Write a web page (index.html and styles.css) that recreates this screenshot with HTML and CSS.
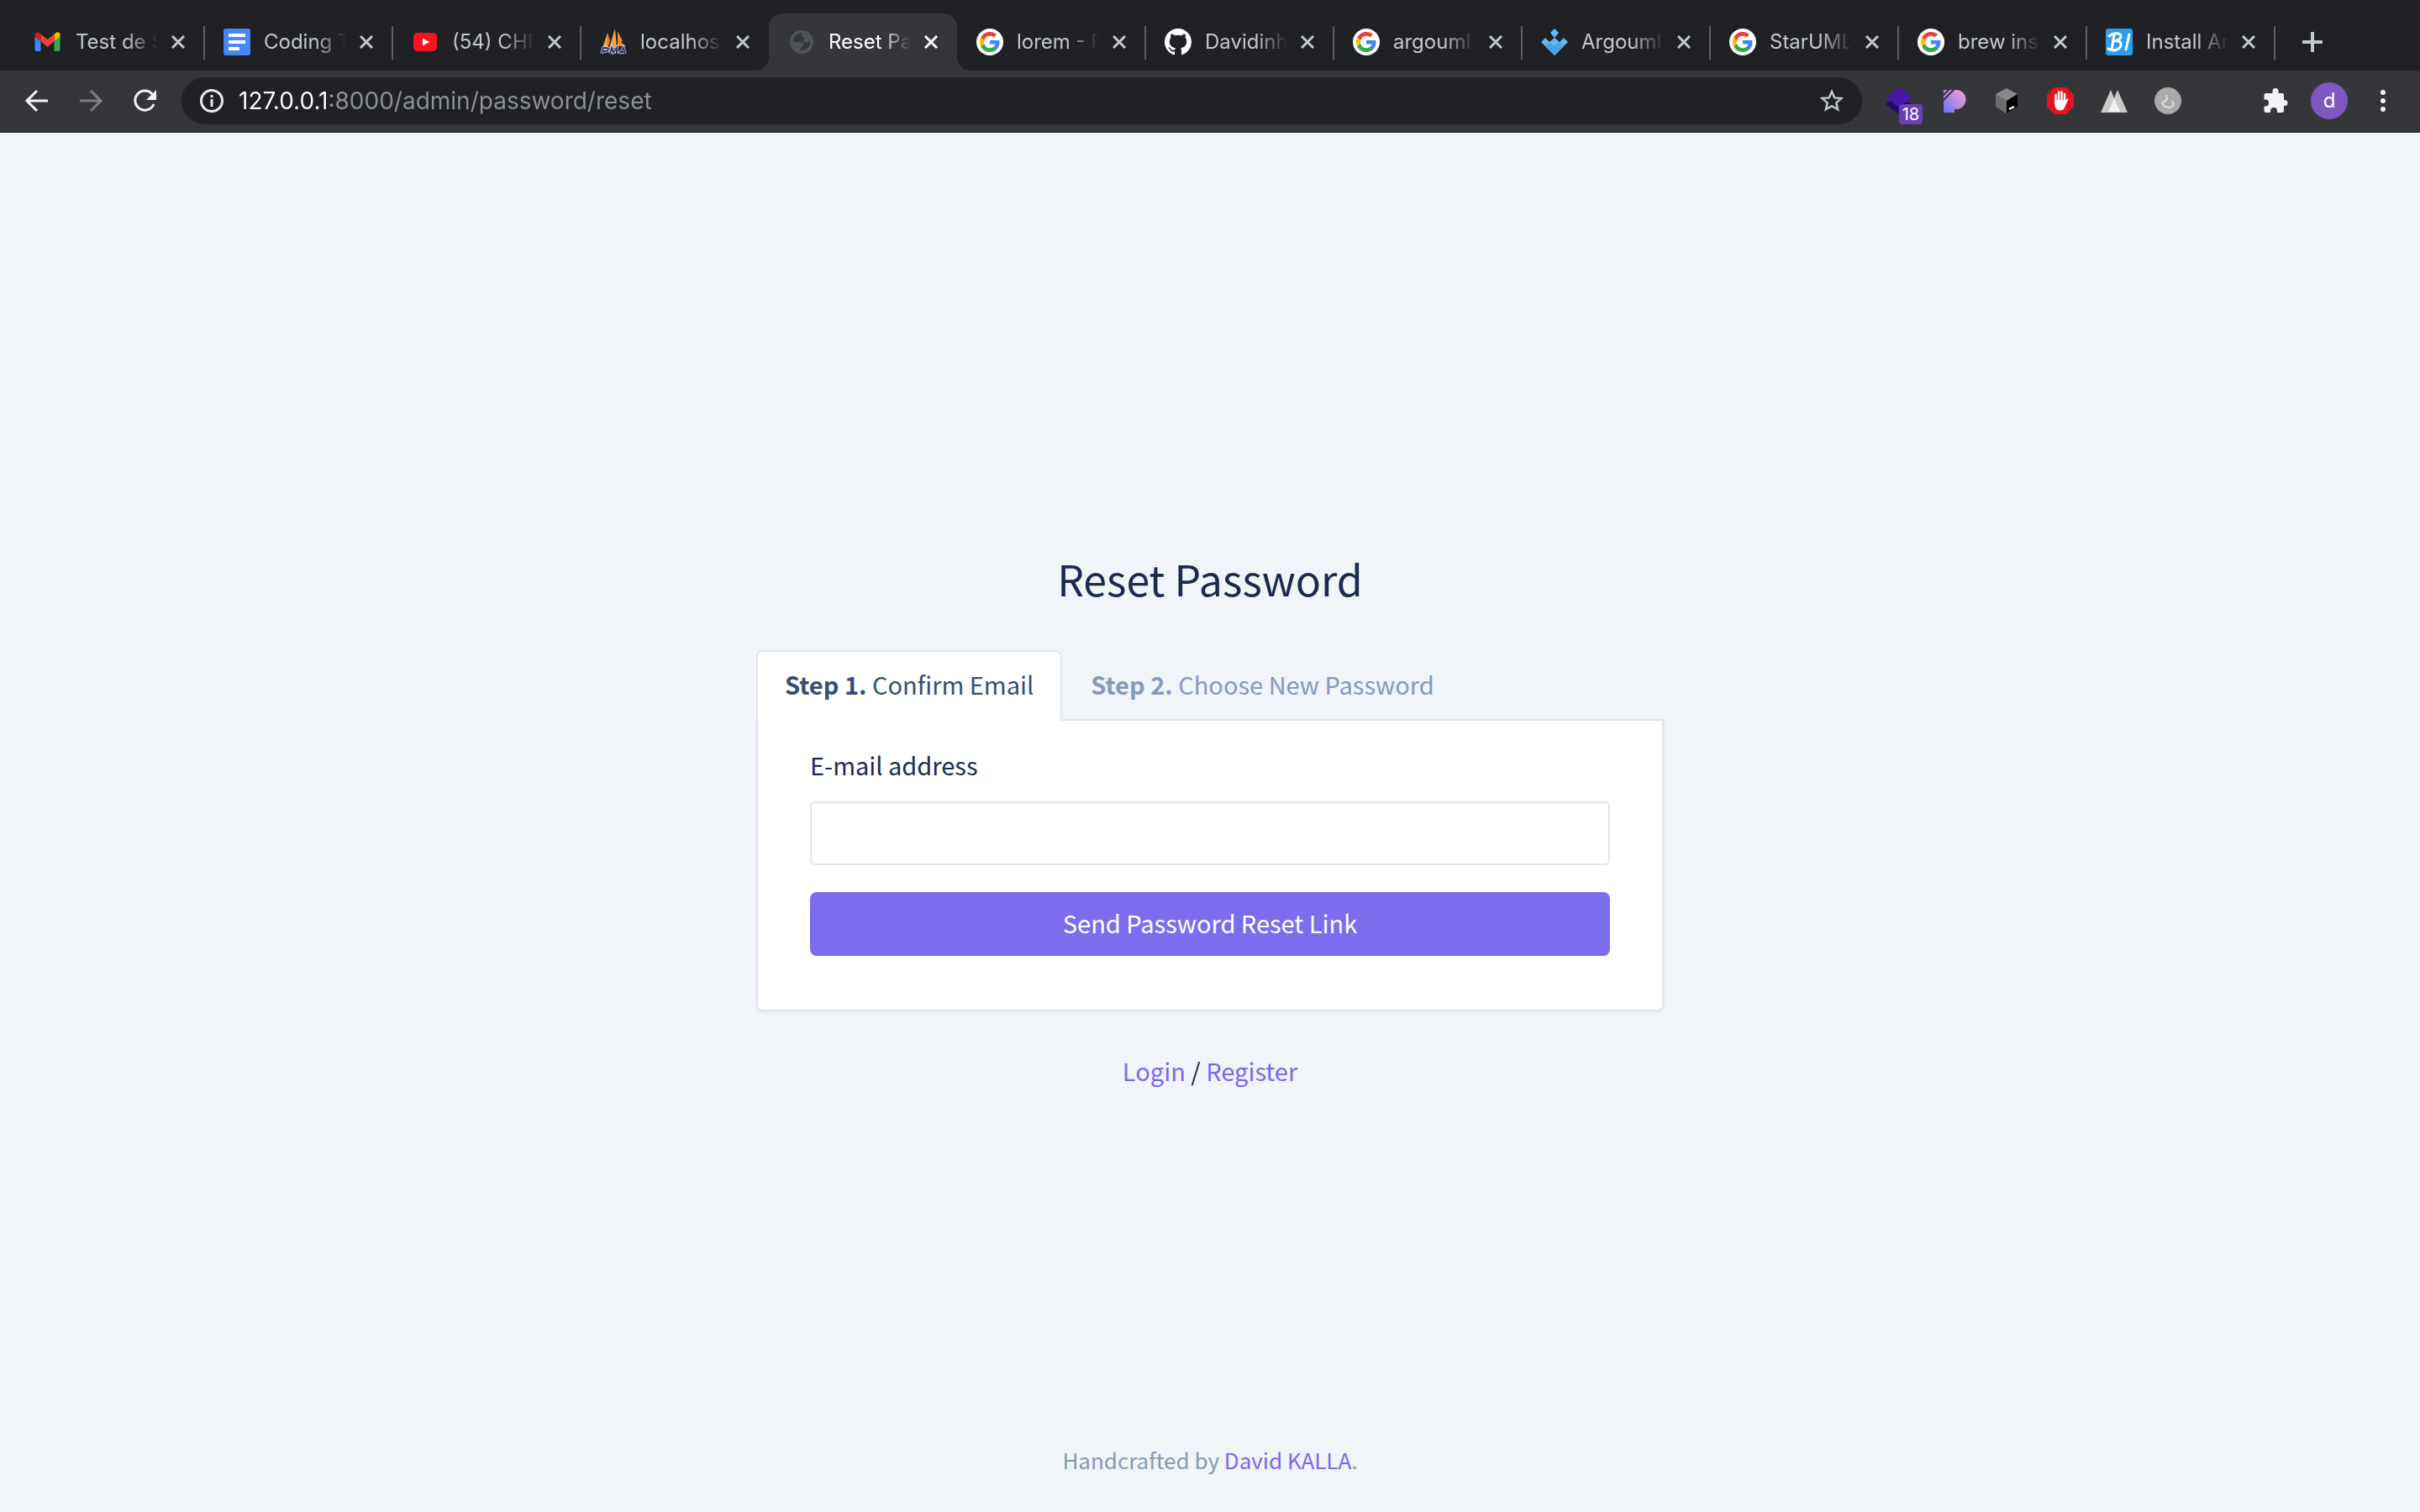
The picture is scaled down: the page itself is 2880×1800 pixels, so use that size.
FILE: index.html
```html
<!DOCTYPE html>
<html lang="en">
<head>
<meta charset="utf-8">
<meta name="viewport" content="width=device-width, initial-scale=1">
<title>Reset Password</title>
<link rel="stylesheet" href="styles.css">
</head>
<body>
<svg class="sprite" aria-hidden="true">
  <symbol id="close" viewBox="0 0 16 16"><path d="M1 1l14 14M15 1L1 15" fill="none" stroke="currentColor" stroke-width="3"/></symbol>
  <symbol id="google" viewBox="0 0 32 32">
    <circle cx="16" cy="16" r="16" fill="#fff"/>
    <g transform="translate(4 4)">
      <path fill="#4285f4" d="M23.5 12.3c0-.8-.1-1.6-.2-2.4H12v4.6h6.5c-.3 1.5-1.100 2.700-2.400 3.600v3h3.900c2.200-2.100 3.500-5.100 3.500-8.800z"/>
      <path fill="#34a853" d="M12 24c3.200 0 6-1.100 8-2.900l-3.900-3c-1.100.7-2.500 1.200-4.100 1.200-3.100 0-5.800-2.100-6.700-5H1.300v3.100C3.300 21.300 7.300 24 12 24z"/>
      <path fill="#fbbc05" d="M5.300 14.300c-.2-.7-.4-1.500-.4-2.300s.1-1.600.4-2.300V6.600h-4C.5 8.200 0 10.100 0 12s.5 3.800 1.300 5.400z"/>
      <path fill="#ea4335" d="M12 4.800c1.800 0 3.300.6 4.600 1.800L20 3.200C17.900 1.200 15.200 0 12 0 7.300 0 3.300 2.700 1.300 6.600l4 3.100c.9-2.800 3.600-4.900 6.700-4.900z"/>
    </g>
  </symbol>
</svg>

<header class="browser">
  <nav class="tabs" aria-label="Open tabs">
    <div class="tab">
      <svg class="favicon" viewBox="0 0 32 32"><path fill="#4285f4" d="M1.500 27h5V15L-.500 10v15a2 2 0 0 0 2 2z"/><path fill="#34a853" d="M22.500 27h5a2 2 0 0 0 2-2V10l-7 5z"/><path fill="#fbbc04" d="M22.500 7v8l7-5V7.500c0-3-3-4-5-2.500z"/><path fill="#ea4335" d="M6.500 15V6.500l8 6.500 8-6.500V15l-8 7z"/><path fill="#c5221f" d="M-.500 8v2l7 5V6.500L4.500 5C2 3.500-.500 5-.500 8z"/></svg>
      <a class="title" href="#">Test de S</a><button class="close" aria-label="Close tab"><svg><use href="#close"/></svg></button>
    </div>
    <div class="tab">
      <svg class="favicon" viewBox="0 0 32 32"><rect width="32" height="32" rx="3" fill="#4688f1"/><path fill="#fff" d="M6 6h20v4H6zM6 14h20v4H6zM6 22h13v4H6z"/></svg>
      <a class="title" href="#">Coding T</a><button class="close" aria-label="Close tab"><svg><use href="#close"/></svg></button>
    </div>
    <div class="tab">
      <svg class="favicon" viewBox="0 0 32 32"><rect x="2" y="5" width="28" height="22" rx="5" fill="#f81320"/><path fill="#fff" d="M13 11.500v9l8-4.500z"/></svg>
      <a class="title" href="#">(54) CHR</a><button class="close" aria-label="Close tab"><svg><use href="#close"/></svg></button>
    </div>
    <div class="tab tab-before">
      <svg class="favicon" viewBox="0 0 32 32"><path fill="#f6a347" d="M3 23L9 5l1 18zM11 23L18 0l2 23z"/><path fill="#f38b20" d="M21 3l6 12-2 1 6 5H21zM9 5l3 9-2 7z"/><path d="M2 30l2-7h4c3 0 2 4-1 4H4M12 30l2-7 2 5 4-5v7M23 30l5-7 2 7M25 28h4" fill="none" stroke="#d9d9e6" stroke-width="3.500"/><path d="M2 30l2-7h4c3 0 2 4-1 4H4M12 30l2-7 2 5 4-5v7M23 30l5-7 2 7M25 28h4" fill="none" stroke="#34366e" stroke-width="2"/></svg>
      <a class="title" href="#">localhost</a><button class="close" aria-label="Close tab"><svg><use href="#close"/></svg></button>
    </div>
    <div class="tab tab-active">
      <svg class="favicon" viewBox="0 0 32 32"><circle cx="16" cy="16" r="14" fill="#505358"/><path fill="#35363a" d="M17 5c-4 1-7 3-6 5l4 1 3 3 4 1 4-2c1 8-3 13-10 13l-3-2 1-3 3-1-1-3H7l-2-2c0 8 5 13 11 13s12-4 12-11S22 3 17 5z" opacity="0"/><path fill="#35363a" d="M17 5l-1 4 3 2-1 4 4 2 4-3c1 7-3 12-10 12h-2l1-4 3-1v-4l-4-1H6c0-6 4-11 11-11z"/></svg>
      <a class="title" href="#" aria-current="page">Reset Pas</a><button class="close" aria-label="Close tab"><svg><use href="#close"/></svg></button>
    </div>
    <div class="tab">
      <svg class="favicon"><use href="#google"/></svg>
      <a class="title" href="#">lorem - R</a><button class="close" aria-label="Close tab"><svg><use href="#close"/></svg></button>
    </div>
    <div class="tab">
      <svg class="favicon" viewBox="0 0 16 16"><path fill="#fff" d="M8 0C3.580 0 0 3.580 0 8c0 3.540 2.290 6.530 5.470 7.590.4.070.55-.17.55-.38 0-.19-.01-.82-.01-1.490-2.010.37-2.530-.49-2.690-.94-.09-.23-.48-.94-.82-1.130-.28-.15-.68-.52-.01-.53.63-.01 1.080.58 1.230.82.72 1.210 1.870.87 2.330.66.07-.52.28-.87.51-1.070-1.780-.2-3.640-.89-3.640-3.950 0-.87.31-1.590.82-2.150-.08-.2-.36-1.020.08-2.120 0 0 .67-.21 2.200.82.64-.18 1.320-.27 2-.27s1.360.09 2 .27c1.530-1.040 2.200-.82 2.200-.82.44 1.100.16 1.920.08 2.120.51.56.82 1.270.82 2.150 0 3.070-1.870 3.750-3.650 3.950.29.25.54.73.54 1.480 0 1.070-.01 1.930-.01 2.200 0 .21.15.46.55.38A8 8 0 0 0 16 8c0-4.420-3.580-8-8-8z"/></svg>
      <a class="title" href="#">Davidinh</a><button class="close" aria-label="Close tab"><svg><use href="#close"/></svg></button>
    </div>
    <div class="tab">
      <svg class="favicon"><use href="#google"/></svg>
      <a class="title" href="#">argouml</a><button class="close" aria-label="Close tab"><svg><use href="#close"/></svg></button>
    </div>
    <div class="tab">
      <svg class="favicon" viewBox="0 0 32 32"><path fill="#63b7f5" d="M16 0l5 5-5 6-5-6zM0 16l5-5 5 5 6-5 6 5 5-5 5 5-16 16z"/><path fill="#4ba3e3" d="M10 16l6 5 6-5 5 5-11 11L5 21z"/></svg>
      <a class="title" href="#">Argouml</a><button class="close" aria-label="Close tab"><svg><use href="#close"/></svg></button>
    </div>
    <div class="tab">
      <svg class="favicon"><use href="#google"/></svg>
      <a class="title" href="#">StarUML</a><button class="close" aria-label="Close tab"><svg><use href="#close"/></svg></button>
    </div>
    <div class="tab">
      <svg class="favicon"><use href="#google"/></svg>
      <a class="title" href="#">brew inst</a><button class="close" aria-label="Close tab"><svg><use href="#close"/></svg></button>
    </div>
    <div class="tab">
      <svg class="favicon" viewBox="0 0 32 32"><rect width="32" height="32" rx="3" fill="#2b9eee"/><path d="M10 7L7 25M4 9c6-5 15-4 14 1-1 4-6 4-8 5 6-1 9 1 8 5-1 5-9 8-15 4M28 7l-4 18" fill="none" stroke="#fff" stroke-width="3" stroke-linecap="round"/></svg>
      <a class="title" href="#">Install Ar</a><button class="close" aria-label="Close tab"><svg><use href="#close"/></svg></button>
    </div>
    <button class="new-tab" aria-label="New tab"><svg width="24" height="24" viewBox="0 0 24 24"><path d="M12 0v24M0 12h24" stroke="currentColor" stroke-width="4"/></svg></button>
  </nav>

  <div class="toolbar">
    <button class="tool" aria-label="Back"><svg viewBox="0 0 32 32"><path d="M29 16H5M16 4L4 16l12 12" fill="none" stroke="#f1f3f4" stroke-width="3"/></svg></button>
    <button class="tool" aria-label="Forward"><svg viewBox="0 0 32 32"><path d="M3 16h24M16 4l12 12-12 12" fill="none" stroke="#7d7f82" stroke-width="3"/></svg></button>
    <button class="tool" aria-label="Reload"><svg viewBox="0 0 32 32"><path d="M27 20a11.500 11.500 0 1 1-2-12" fill="none" stroke="#f1f3f4" stroke-width="3"/><path fill="#f1f3f4" d="M30 3v12H18z"/></svg></button>
    <div class="omnibox">
      <svg width="28" height="28" viewBox="0 0 28 28"><circle cx="14" cy="14" r="12.500" fill="none" stroke="#e8eaed" stroke-width="3"/><path fill="#e8eaed" d="M12.500 7h3v3h-3zM12.500 12h3v9h-3z"/></svg>
      <input class="url" type="text" aria-label="Address" value="127.0.0.1:8000/admin/password/reset">
      <button class="star" aria-label="Bookmark"><svg width="28" height="28" viewBox="0 0 28 28"><path d="M14 3l3.300 7.400 8.100.7-6.100 5.300 1.800 7.900-7.100-4.200-7.100 4.200 1.800-7.900-6.100-5.300 8.100-.7z" fill="none" stroke="#c4c7cb" stroke-width="2.500"/></svg></button>
    </div>
    <button class="tool" aria-label="Layers extension, 18 items"><svg viewBox="0 0 32 32"><path fill="#1f0a6b" d="M0 20l9-7 23 7-16 12z"/><path fill="#4818a8" d="M16 0l16 12-16 12L0 12z"/></svg><span class="badge">18</span></button>
    <button class="tool" aria-label="Stripes extension"><svg viewBox="0 0 32 32"><defs><linearGradient id="pg" x1="0" y1="1" x2="1" y2="0"><stop offset="0" stop-color="#6675ff"/><stop offset=".5" stop-color="#b58be6"/><stop offset="1" stop-color="#ff9fc3"/></linearGradient></defs><path fill="url(#pg)" d="M5 3h15a11.500 11.500 0 0 1 0 23h-2v4H5z"/><path d="M3 11l10-10M3 17L19 1" stroke="#35363a" stroke-width="2"/></svg></button>
    <button class="tool" aria-label="Cube extension"><svg viewBox="0 0 32 32"><path fill="#888" d="M16 1l13 7v15l-13 8-13-8V8z"/><path fill="#6c6c6c" d="M3 8l13 8v15L3 23z"/><path fill="#050505" d="M29 8v15l-13 8V16z"/><path d="M19 26l6-3" stroke="#fff" stroke-width="2.500"/></svg></button>
    <button class="tool" aria-label="Ad blocker"><svg viewBox="0 0 32 32"><path fill="#e5131d" d="M9 0h14l9 9v14l-9 9H9l-9-9V9z"/><path d="M10.500 18V9M14 16V5.500M17.500 16V5.500M21 18V8" stroke="#fff" stroke-width="2.500" stroke-linecap="round"/><path fill="#fff" d="M9.200 15h13l2-1.500c1-.5 1.600.5 1 1.500L22 22c-1 3.500-3 5.500-6 5.500-5.500 0-6.800-4-6.800-8.500z"/></svg></button>
    <button class="tool" aria-label="Mountain extension"><svg viewBox="0 0 32 32"><path fill="#c9c9c9" d="M12 3l11 27H0zM20 3l12 27H9z"/><path fill="#f0f0f0" d="M16 13l7 16H9z"/></svg></button>
    <button class="tool" aria-label="Hook extension"><svg viewBox="0 0 32 32"><circle cx="16" cy="16" r="16" fill="#a9a9a9"/><path d="M14 9l1 5-6 5 3 4 6 1 5-3-2-5" fill="none" stroke="#dedede" stroke-width="2" stroke-linejoin="round"/></svg></button>
    <button class="tool" aria-label="Inactive extension"><svg viewBox="0 0 32 32"><circle cx="16" cy="16" r="8" fill="none" stroke="#303539" stroke-width="2" stroke-dasharray="3 2"/><path d="M11 13l9 6M13 20l6-8" stroke="#303539"/></svg></button>
    <button class="tool" aria-label="Extensions"><svg viewBox="0 0 32 32"><path fill="#f1f3f4" d="M27 15h-1V9a2 2 0 0 0-2-2h-4.500V4.500a3.500 3.500 0 0 0-7 0V7H4.500a2 2 0 0 0-2 2v5.500H4a4 4 0 0 1 0 8H2.500V28a2 2 0 0 0 2 2H10v-2a4 4 0 0 1 8 0v2h6a2 2 0 0 0 2-2v-6h1a3.500 3.500 0 0 0 0-7z"/></svg></button>
    <button class="tool" aria-label="Profile"><span class="avatar">d</span></button>
    <button class="tool" aria-label="Menu"><svg viewBox="0 0 32 32"><g fill="#f1f3f4"><circle cx="16" cy="6" r="3"/><circle cx="16" cy="16" r="3"/><circle cx="16" cy="26" r="3"/></g></svg></button>
  </div>
</header>

<div class="page">
  <main class="reset">
    <h1 class="heading">Reset Password</h1>
    <ol class="steps">
      <li class="step step-current"><strong>Step 1.</strong> Confirm Email</li>
      <li class="step"><strong>Step 2.</strong> Choose New Password</li>
    </ol>
    <form class="card">
      <label class="label" for="email">E-mail address</label>
      <input class="field" type="email" id="email" name="email">
      <button class="submit" type="submit">Send Password Reset Link</button>
    </form>
    <p class="links"><a href="#">Login</a> / <a href="#">Register</a></p>
  </main>
  <footer class="footer">Handcrafted by <a href="#">David KALLA</a>.</footer>
</div>
</body>
</html>
```
FILE: styles.css
```css
* { box-sizing: border-box; }

body {
  margin: 0;
  min-height: 100vh;
  display: flex;
  flex-direction: column;
  background: #f1f4f9;
  color: #1b2a4e;
  font: 29px/48px "Noto Sans CJK JP", "Noto Sans", sans-serif;
}

button, input { font: inherit; margin: 0; }
a { color: #7c69ef; text-decoration: none; }
strong { font-weight: 700; }
.sprite { display: none; }

/* Browser frame */
.browser {
  background: #202124;
  font: 24px/32px Inter, Roboto, sans-serif;
  border-bottom: 2px solid #28292c;
}
.browser button {
  padding: 0;
  border: 0;
  background: none;
  color: inherit;
}
.tabs {
  display: flex;
  height: 84px;
  padding: 16px 0 0 19px;
  color: #c4c7cb;
}
.tab {
  position: relative;
  flex: 0 1 224px;
  min-width: 0;
  display: flex;
  align-items: center;
  padding: 0 23px;
}
.tab::after {
  content: "";
  position: absolute;
  right: -1px;
  top: 15px;
  width: 2px;
  height: 40px;
  background: #5b5d61;
}
.tab-before::after { display: none; }
.favicon { flex: none; width: 32px; height: 32px; overflow: visible; }
.title {
  flex: 1;
  min-width: 0;
  margin: 0 16px;
  overflow: hidden;
  white-space: nowrap;
  color: inherit;
  -webkit-mask-image: linear-gradient(to right, #000 62%, transparent);
  mask-image: linear-gradient(to right, #000 62%, transparent);
}
.close { flex: none; width: 16px; height: 16px; display: flex; }
.close svg { width: 16px; height: 16px; }
.tab-active {
  background: #35363a;
  border-radius: 16px 16px 0 0;
  color: #fff;
}
.tab-active::before,
.tab-active::after {
  content: "";
  position: absolute;
  top: auto;
  bottom: 0;
  width: 16px;
  height: 16px;
}
.tab-active::before {
  left: -16px;
  background: radial-gradient(circle at 0 0, transparent 16px, #35363a 16px);
}
.tab-active::after {
  right: -16px;
  background: radial-gradient(circle at 100% 0, transparent 16px, #35363a 16px);
}
.new-tab { flex: none; width: 90px; display: grid; place-items: center; }

.toolbar {
  display: flex;
  align-items: center;
  height: 72px;
  padding: 0 12px;
  background: #35363a;
}
.tool {
  position: relative;
  flex: none;
  width: 64px;
  height: 56px;
  display: grid;
  place-items: center;
}
.tool svg { width: 32px; height: 32px; }
.omnibox {
  flex: 1;
  min-width: 0;
  display: flex;
  align-items: center;
  height: 56px;
  margin: 0 12px;
  padding: 0 22px;
  border-radius: 28px;
  background: #202124;
}
.omnibox svg { display: block; flex: none; }
.url {
  flex: 1;
  min-width: 0;
  padding: 0;
  margin: 0 18px;
  border: 0;
  outline: 0;
  font-size: 28px;
  color: #fff;
  /* host in white, the rest of the address dimmed */
  background: linear-gradient(to right, #fff 109px, #8f9296 109px);
  -webkit-background-clip: text;
  background-clip: text;
  -webkit-text-fill-color: transparent;
}
.badge {
  position: absolute;
  right: 4px;
  bottom: 0;
  width: 28px;
  border-radius: 4px;
  background: #6b3fb8;
  color: #fff;
  font-size: 20px;
  line-height: 24px;
}
.avatar {
  width: 44px;
  border-radius: 50%;
  background: #7e57c2;
  color: #fff;
  line-height: 44px;
}

/* Page */
.page {
  flex: 1;
  display: grid;
  grid-template-rows: 1fr auto 1fr;
  justify-items: center;
}
.reset {
  grid-row: 2;
  width: 100%;
  max-width: 1080px;
}
.heading {
  margin: 0 0 58px;
  font-size: 50px;
  font-weight: 400;
  line-height: 56px;
  text-align: center;
}
.steps {
  display: flex;
  margin: 0;
  padding: 0;
  list-style: none;
}
.step {
  margin-bottom: -2px;
  padding: 14px 32px 20px;
  border: 2px solid transparent;
  border-bottom: 0;
  color: #869ab8;
}
.step-current {
  position: relative;
  background: #fff;
  border-color: #e2e6ed;
  border-radius: 8px 8px 0 0;
  color: #384c74;
}
.card {
  display: flex;
  flex-direction: column;
  padding: 28px 62px 64px;
  border: 2px solid #dfe4ec;
  border-radius: 0 0 8px 8px;
  background: #fff;
  box-shadow: 0 2px 4px rgba(27, 42, 78, 0.06);
}
.label { margin-bottom: 20px; }
.field {
  height: 76px;
  padding: 12px 24px;
  border: 2px solid #dfe4ec;
  border-radius: 6px;
  background: #fff;
  color: inherit;
}
.submit {
  height: 76px;
  margin-top: 32px;
  padding: 0 0 4px;
  border: 0;
  border-radius: 8px;
  background: #7c6dee;
  color: #fff;
}
.links { margin: 46px 0 0; text-align: center; }
.footer {
  grid-row: 3;
  align-self: end;
  padding-bottom: 38px;
  font-size: 26px;
  color: #869ab8;
}
```
